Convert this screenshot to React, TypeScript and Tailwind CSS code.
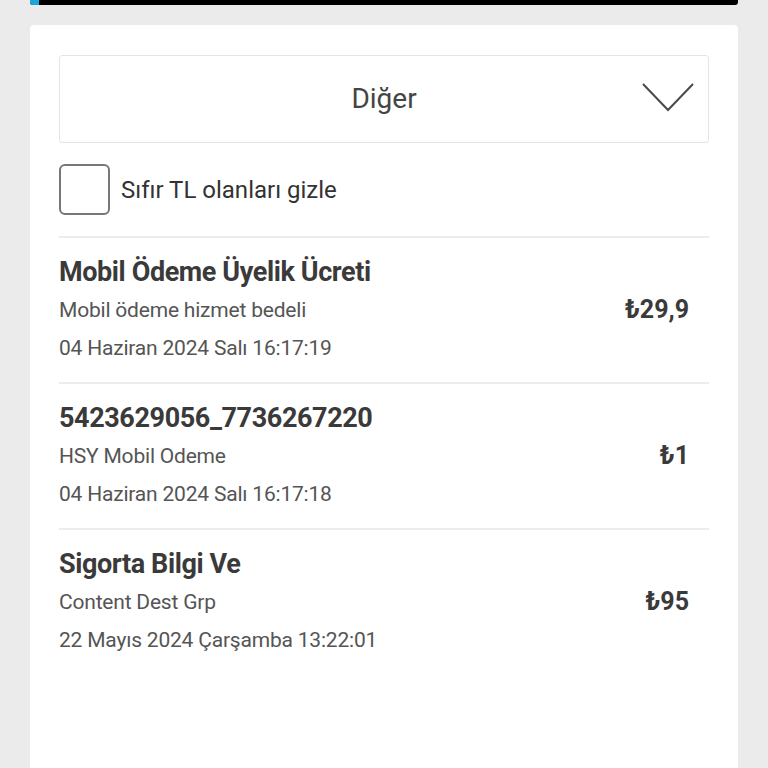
import React from "react";

const items = [
  {
    title: "Mobil Ödeme Üyelik Ücreti",
    desc: "Mobil ödeme hizmet bedeli",
    date: "04 Haziran 2024 Salı 16:17:19",
    amount: "₺29,9",
  },
  {
    title: "5423629056_7736267220",
    desc: "HSY Mobil Odeme",
    date: "04 Haziran 2024 Salı 16:17:18",
    amount: "₺1",
  },
  {
    title: "Sigorta Bilgi Ve",
    desc: "Content Dest Grp",
    date: "22 Mayıs 2024 Çarşamba 13:22:01",
    amount: "₺95",
  },
];

const Row = ({ title, desc, date, amount, last }: { title: string; desc: string; date: string; amount: string; last: boolean }) => {
  return (
    <div className={`flex items-center justify-between pt-[15px] pb-[15px] ${last ? "" : "border-b-2 border-[#ececec]"}`}>
      <div className="flex flex-col">
        <h3 className="text-[27px] leading-[38px] font-bold text-[#3a3a3a] tracking-[-0.4px]">{title}</h3>
        <p className="text-[21px] leading-[38px] text-[#555] tracking-[-0.2px]">{desc}</p>
        <p className="text-[21px] leading-[38px] text-[#555] tracking-[-0.2px]">{date}</p>
      </div>
      <span className="pr-[20px] text-[25px] font-bold text-[#3a3a3a]">{amount}</span>
    </div>
  );
};

export default function App() {
  return (
    <div className="min-h-[768px] bg-[#ebebeb] px-[30px] font-['Roboto',sans-serif]">
      <div className="flex h-[5px] overflow-hidden rounded-b-[3px] bg-black">
        <div className="w-[9px] bg-[#1aa6d6]" />
      </div>
      <div className="mt-[20px] min-h-[743px] rounded-t-[4px] bg-white px-[29px] pt-[30px]">
        <div className="relative flex h-[88px] items-center justify-center rounded-[3px] border border-[#e4e4e4]">
          <span className="text-[28px] text-[#444]">Diğer</span>
          <svg className="absolute right-[14px] top-[27px]" width="52" height="29" viewBox="0 0 52 29" fill="none">
            <path d="M1 1 L26 27 L51 1" stroke="#4a4a4a" strokeWidth="2" />
          </svg>
        </div>
        <div className="mt-[21px] flex items-center gap-[11px]">
          <div className="h-[51px] w-[51px] rounded-[6px] border-2 border-[#777]" />
          <span className="text-[24px] text-[#333]">Sıfır TL olanları gizle</span>
        </div>
        <div className="mt-[21px] h-[2px] bg-[#ececec]" />
        {items.map((it, i) => (
          <Row key={i} {...it} last={i === items.length - 1} />
        ))}
      </div>
    </div>
  );
}
